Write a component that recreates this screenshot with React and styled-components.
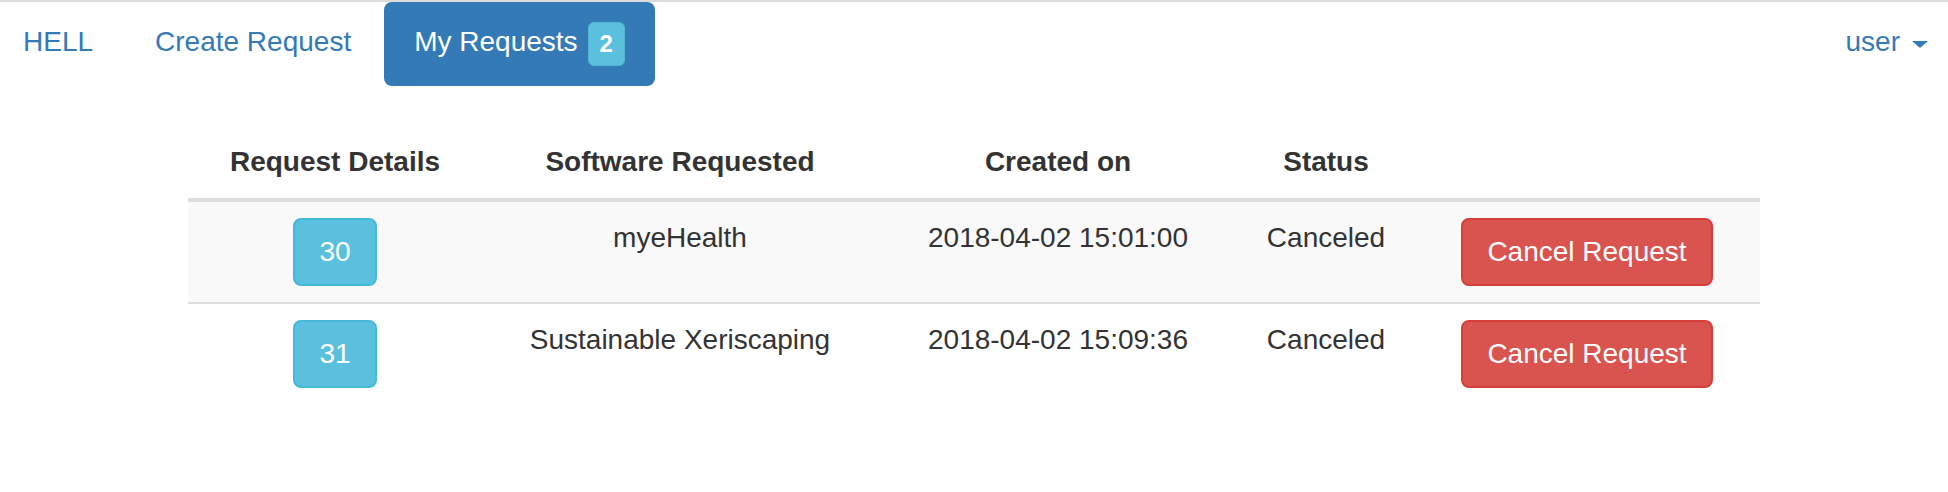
import React from "react";
import styled, { createGlobalStyle } from "styled-components";

const GlobalStyle = createGlobalStyle`
  html, body {
    margin: 0;
    padding: 0;
    background: #fff;
    font-family: "Liberation Sans", Arial, sans-serif;
    font-size: 28px;
    color: #333;
  }
`;

const requests = [
  { id: 30, software: "myeHealth", created: "2018-04-02 15:01:00", status: "Canceled" },
  { id: 31, software: "Sustainable Xeriscaping", created: "2018-04-02 15:09:36", status: "Canceled" },
];

const columns = [
  { title: "Request Details", width: 294 },
  { title: "Software Requested", width: 396 },
  { title: "Created on", width: 360 },
  { title: "Status", width: 176 },
  { title: "", width: 346 },
];

const Navbar = () => {
  return (
    <NavBar>
      <Brand href="#">HELL</Brand>
      <NavLink href="#">Create Request</NavLink>
      <ActivePill href="#">
        My Requests
        <Badge>2</Badge>
      </ActivePill>
      <UserMenu href="#">
        user
        <Caret />
      </UserMenu>
    </NavBar>
  );
};

const RequestsTable = () => {
  return (
    <Table>
      <colgroup>
        {columns.map((c, i) => (
          <col key={i} style={{ width: c.width }} />
        ))}
      </colgroup>
      <thead>
        <tr>
          {columns.map((c, i) => (
            <Th key={i}>{c.title}</Th>
          ))}
        </tr>
      </thead>
      <tbody>
        {requests.map((r, i) => (
          <Row key={r.id} $striped={i % 2 === 0}>
            <Td>
              <Button $variant="info">{r.id}</Button>
            </Td>
            <Td>{r.software}</Td>
            <Td>{r.created}</Td>
            <Td>{r.status}</Td>
            <Td>
              <Button $variant="danger">Cancel Request</Button>
            </Td>
          </Row>
        ))}
      </tbody>
    </Table>
  );
};

const App = () => {
  return (
    <>
      <GlobalStyle />
      <Navbar />
      <Content>
        <RequestsTable />
      </Content>
    </>
  );
};

const NavBar = styled.nav`
  display: flex;
  align-items: flex-start;
  border-top: 2px solid #dcdcdc;
  height: 84px;
  line-height: 40px;
`;

const Brand = styled.a`
  color: #337ab7;
  text-decoration: none;
  padding: 20px 32px 0 23px;
`;

const NavLink = styled.a`
  color: #337ab7;
  text-decoration: none;
  padding: 20px 30px 0;
`;

const ActivePill = styled.a`
  display: flex;
  align-items: flex-start;
  gap: 10px;
  margin-left: 3px;
  padding: 20px 30px;
  background: #337ab7;
  color: #fff;
  border-radius: 8px;
  text-decoration: none;
`;

const Badge = styled.span`
  display: flex;
  align-items: center;
  justify-content: center;
  width: 37px;
  height: 44px;
  box-sizing: border-box;
  background: #5bc0de;
  border: 1px solid #52b6d6;
  border-radius: 6px;
  color: #fff;
  font-size: 24px;
  font-weight: bold;
  line-height: 1;
`;

const UserMenu = styled.a`
  display: flex;
  align-items: center;
  gap: 12px;
  margin-left: auto;
  margin-right: 20px;
  padding-top: 20px;
  height: 40px;
  color: #337ab7;
  text-decoration: none;
  line-height: 40px;
`;

const Caret = styled.span`
  width: 0;
  height: 0;
  margin-top: 4px;
  border-left: 8px solid transparent;
  border-right: 8px solid transparent;
  border-top: 7px solid #337ab7;
`;

const Content = styled.main`
  padding-top: 40px;
`;

const Table = styled.table`
  width: 1572px;
  margin: 0 auto;
  border-collapse: collapse;
  border-spacing: 0;
  table-layout: fixed;
`;

const Th = styled.th`
  padding: 16px;
  line-height: 40px;
  text-align: center;
  vertical-align: bottom;
  font-weight: bold;
  border-bottom: 4px solid #ddd;
`;

const Row = styled.tr`
  background: ${(p) => (p.$striped ? "#f9f9f9" : "transparent")};
`;

const Td = styled.td`
  padding: 16px;
  line-height: 40px;
  text-align: center;
  vertical-align: top;
  border-top: 2px solid #ddd;

  tr:first-child > & {
    border-top: 0;
  }
`;

const Button = styled.button`
  font-family: inherit;
  font-size: 28px;
  line-height: 40px;
  padding: 12px 24px;
  border-radius: 8px;
  color: #fff;
  cursor: pointer;
  background: ${(p) => (p.$variant === "danger" ? "#d9534f" : "#5bc0de")};
  border: 2px solid ${(p) => (p.$variant === "danger" ? "#d43f3a" : "#46b8da")};
`;

export default App;
